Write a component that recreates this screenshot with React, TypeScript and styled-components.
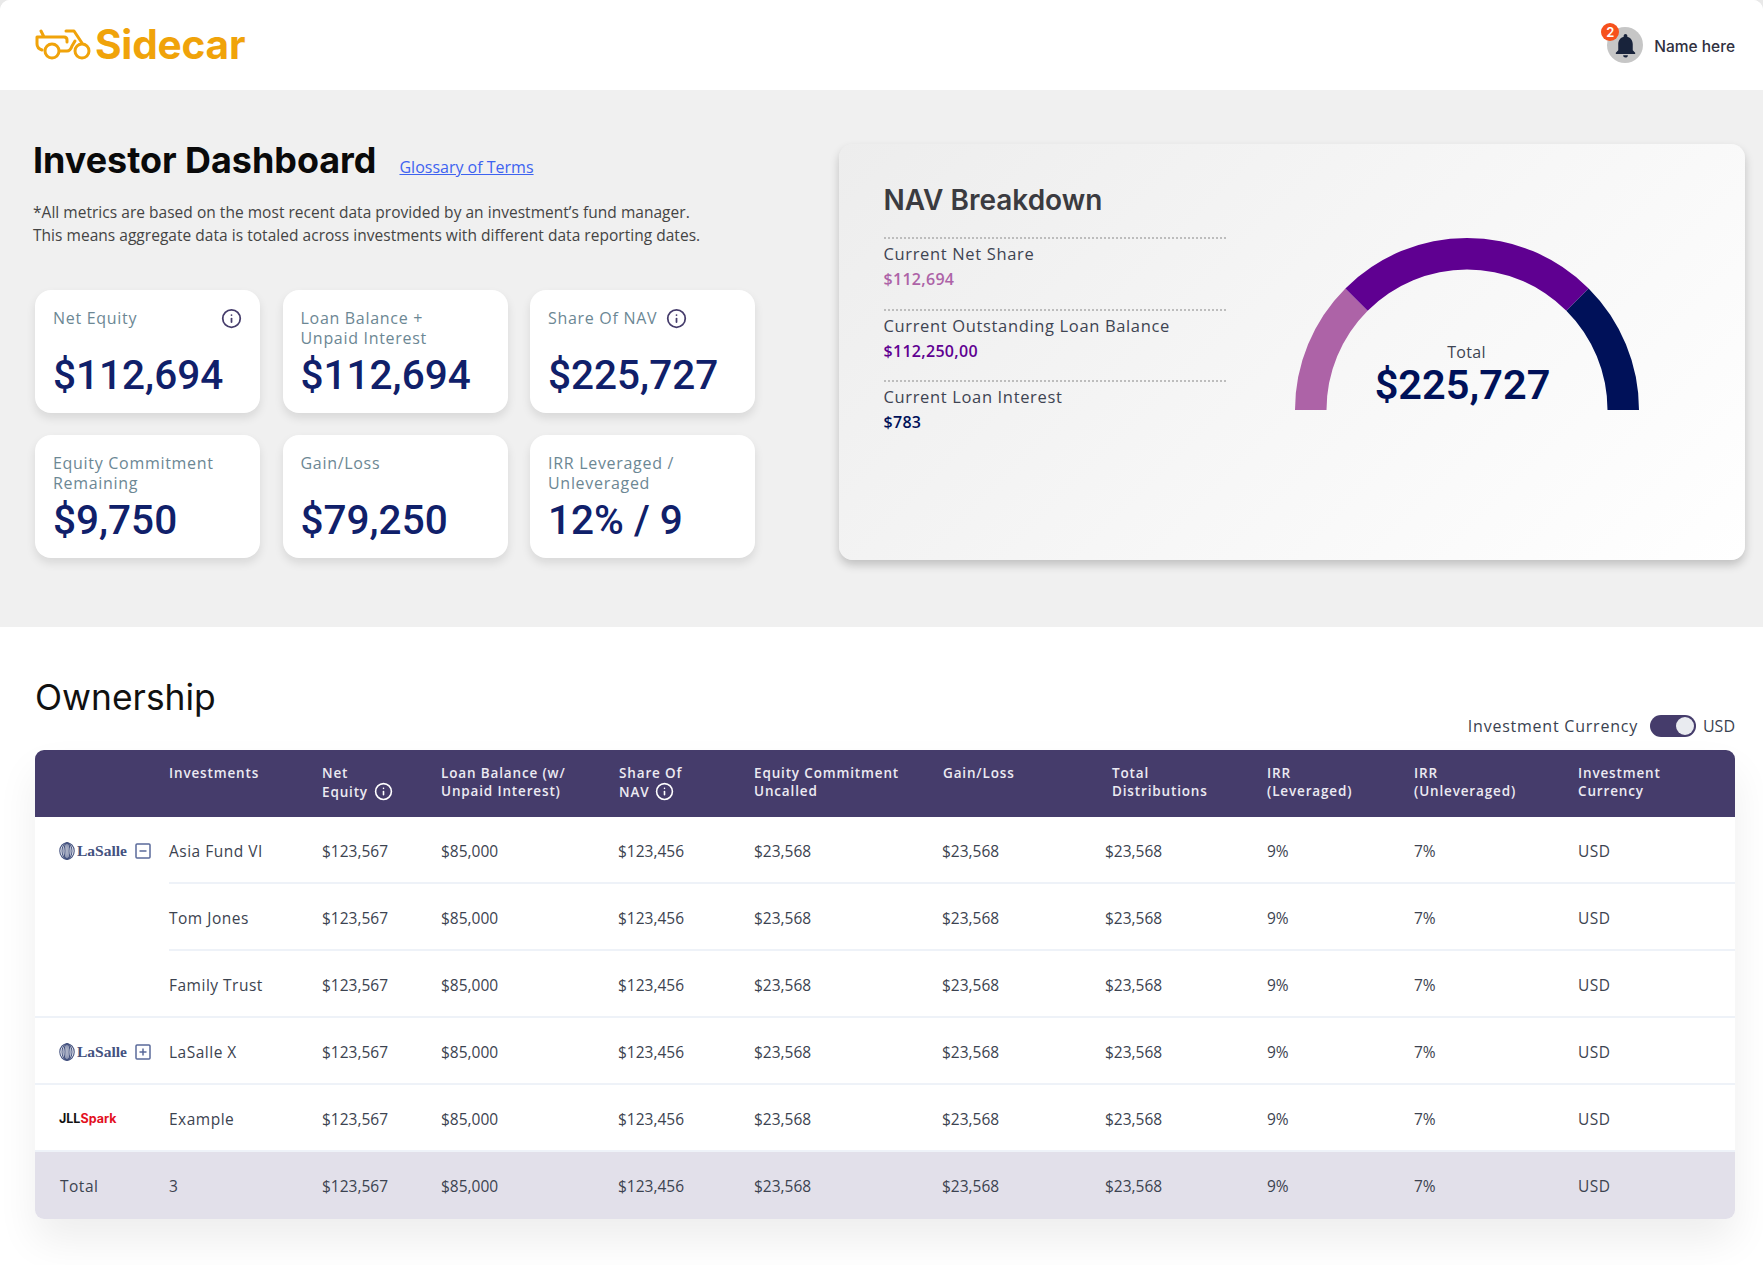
import React from "react";
import styled, { createGlobalStyle } from "styled-components";
import { Info } from "lucide-react";
import { MdNotifications } from "react-icons/md";

const soft = `"Open Sans", "Lato", sans-serif`;
const strong = `"Inter", "Liberation Sans", sans-serif`;
const digits = `"Roboto", "Liberation Sans", sans-serif`;

const Global = createGlobalStyle`
  html, body { margin: 0; padding: 0; background: #e9e9e9; }
  body { font-family: ${soft}; color: #3c4350; }
  * { box-sizing: border-box; }
`;

const Page = styled.div`
  width: 1763px;
  min-height: 1265px;
  background: #fff;
  border-radius: 10px 10px 0 0;
  overflow: hidden;
`;

const TopBar = styled.header`
  height: 90px;
  display: flex;
  align-items: center;
  justify-content: space-between;
  padding: 0 28px 0 35px;
  background: #fff;
`;
const Brand = styled.div`
  display: flex;
  align-items: center;
  gap: 4px;
`;
const BrandName = styled.span`
  font: 700 40.6px/46px ${strong};
  color: #f0a30a;
  letter-spacing: -0.2px;
`;
const UserBox = styled.div`
  display: flex;
  align-items: center;
  gap: 11px;
`;
const Avatar = styled.div`
  position: relative;
  width: 36px;
  height: 36px;
  border-radius: 50%;
  background: #c6c6c6;
  color: #18233b;
  display: flex;
  align-items: center;
  justify-content: center;
`;
const Badge = styled.span`
  position: absolute;
  left: -6px;
  top: -4px;
  width: 18px;
  height: 18px;
  border-radius: 50%;
  background: #f6511d;
  color: #fff;
  font: 600 13px/18px ${strong};
  text-align: center;
`;
const UserName = styled.span`
  padding-top: 3px;
  font: 500 15.5px/20px ${strong};
  color: #30303f;
`;

const Summary = styled.section`
  height: 537px;
  background: #f0f0f0;
  display: flex;
  align-items: flex-start;
  padding: 48px 18px 0 33px;
`;
const SummaryLeft = styled.div`
  flex: none;
  width: 806px;
`;
const TitleRow = styled.div`
  display: flex;
  align-items: baseline;
  gap: 23px;
`;
const PageTitle = styled.h1`
  margin: 0;
  font: 700 35.9px/44px ${strong};
  color: #0a0a0a;
`;
const Glossary = styled.a`
  font: 500 16px/20px ${soft};
  color: #3e63f0;
  text-decoration: underline;
`;
const Note = styled.p`
  margin: 19px 0 0;
  font: 400 15.5px/23px ${soft};
  letter-spacing: 0.03px;
  color: #444;
`;
const MetricGrid = styled.div`
  margin: 43px 0 0 2px;
  display: grid;
  grid-template-columns: repeat(3, 225px);
  column-gap: 22.5px;
  row-gap: 22px;
`;
const MetricCard = styled.div`
  height: 123px;
  background: #fff;
  border-radius: 16px;
  padding: 18px 18px 0;
  box-shadow: 0 5px 10px rgba(0, 0, 0, 0.1);
`;
const MetricHead = styled.div<{ $spread?: boolean }>`
  min-height: 40px;
  display: flex;
  align-items: flex-start;
  justify-content: ${(p) => (p.$spread ? "space-between" : "flex-start")};
  gap: 9px;
  font: 400 16px/20px ${soft};
  letter-spacing: 0.7px;
  color: #6c8794;
`;
const InfoMark = styled(Info)<{ $tone?: string }>`
  flex: none;
  color: ${(p) => p.$tone || "#453c6b"};
`;
const MetricValue = styled.div`
  padding-top: 1px;
  font: 500 40.5px/52px ${digits};
  color: #10206a;
`;

const NavCard = styled.div`
  margin-top: 6px;
  width: 906px;
  height: 416px;
  border-radius: 14px;
  background: linear-gradient(135deg, #ededed 0%, #ffffff 100%);
  box-shadow: 0 5px 10px rgba(0, 0, 0, 0.2);
  padding: 38px 44.5px 0;
  display: flex;
`;
const NavList = styled.div`
  flex: none;
  width: 342px;
`;
const NavTitle = styled.h2`
  margin: 0 0 19px;
  font: 600 28px/37px ${strong};
  color: #3b3b40;
`;
const NavRow = styled.div`
  height: 71.5px;
  margin-top: -1px;
  margin-bottom: 1px;
  border-top: 2px dotted #bdbdbd;
  padding-top: 4px;
`;
const NavLabel = styled.div`
  font: 400 16.5px/22px ${soft};
  letter-spacing: 0.65px;
  color: #3e4452;
`;
const NavValue = styled.div<{ $tone: string }>`
  margin-top: 1px;
  font: 600 16px/26px ${soft};
  letter-spacing: 0.3px;
  color: ${(p) => p.$tone};
`;
const Gauge = styled.div`
  position: relative;
  flex: none;
  width: 344px;
  height: 172px;
  margin: 56px 0 0 69px;
`;
const GaugeTotal = styled.div`
  position: absolute;
  left: 0;
  right: 0;
  top: 102px;
  text-align: center;
  font: 400 16px/24px ${soft};
  letter-spacing: 0.3px;
  color: #3e4452;
`;
const GaugeValue = styled.div`
  position: absolute;
  left: -4px;
  right: 4px;
  top: 124px;
  text-align: center;
  font: 600 41.5px/46px ${digits};
  color: #001159;
`;

const Ownership = styled.section`
  padding: 48px 28px 0 35px;
`;
const OwnershipBar = styled.div`
  height: 75px;
  display: flex;
  justify-content: space-between;
  align-items: flex-start;
`;
const OwnershipTitle = styled.h2`
  margin: 1px 0 0;
  font: 400 35.4px/44px ${strong};
  color: #111;
`;
const CurrencyControl = styled.div`
  align-self: flex-end;
  height: 22px;
  margin-bottom: 13px;
  display: flex;
  align-items: center;
  font: 400 16px/22px ${soft};
  letter-spacing: 0.77px;
  color: #3a4250;
`;
const CurrencyCode = styled.span`
  letter-spacing: 0;
`;
const SwitchTrack = styled.span`
  width: 46px;
  height: 22px;
  margin: 0 7px 0 12px;
  padding: 2px;
  border-radius: 11px;
  background: #453c6b;
  display: flex;
  justify-content: flex-end;
`;
const SwitchThumb = styled.span`
  width: 18px;
  height: 18px;
  border-radius: 50%;
  background: #e9ebf0;
`;

const TableFrame = styled.div`
  width: 1700px;
  border-radius: 9px;
  overflow: hidden;
`;
const TableShadow = styled.div`
  border-radius: 9px;
  box-shadow: 0 22px 40px rgba(0, 0, 0, 0.07);
`;
const columns = "134px 153px 119px 177px 136px 188px 163px 162px 147px 164px 157px";
const HeadRow = styled.div`
  display: grid;
  grid-template-columns: ${columns};
  height: 67px;
  background: #453c6b;
`;
const HeadCell = styled.div<{ $nudge?: number }>`
  padding: 14px 0 0 ${(p) => p.$nudge || 0}px;
  font: 600 13.5px/18px ${soft};
  letter-spacing: 0.85px;
  color: #eceaf2;
`;
const HeadInline = styled.span`
  display: inline-flex;
  align-items: center;
  gap: 6px;
`;
const BodyRow = styled.div<{ $total?: boolean }>`
  display: grid;
  grid-template-columns: ${columns};
  height: 67px;
  background: ${(p) => (p.$total ? "#e2e0ea" : "#fff")};
`;
const Cell = styled.div<{ $plain?: boolean; $word?: boolean }>`
  display: flex;
  align-items: center;
  padding-top: 2px;
  font: 400 15.5px/20px ${soft};
  letter-spacing: ${(p) => (p.$word ? "0.5px" : "0")};
  color: #3c4350;
  border-bottom: 2px solid ${(p) => (p.$plain ? "transparent" : "#eef2f8")};
`;
const LogoCell = styled(Cell)`
  justify-content: space-between;
  padding: 2px 18px 0 24px;
`;
const LaSalle = styled.span`
  display: flex;
  align-items: center;
  gap: 2px;
  font: 700 15.5px/18px "Liberation Serif", serif;
  letter-spacing: 0;
  color: #44527f;
`;
const ExpandBox = styled.span`
  flex: none;
  width: 16px;
  height: 16px;
  color: #5a6a9a;
  display: flex;
`;
const Spark = styled.span`
  font: 700 12.5px/16px ${strong};
  letter-spacing: 0;
  color: #e3101f;
`;
const SparkBlack = styled.span`
  color: #111;
`;
const TotalLabel = styled(Cell)`
  padding-left: 25px;
`;

const SidecarLogo = () => (
  <svg width="56" height="32" viewBox="0 0 56 32" fill="none" stroke="#f0a30a" strokeWidth="3" strokeLinecap="round" strokeLinejoin="round">
    <circle cx="17" cy="22" r="7" />
    <circle cx="47" cy="22" r="7" />
    <path d="M6 2l3 6M2 8h27c2 0 3 1 3 3v2M2 8v7c0 3 2 5 5 6" />
    <path d="M31 2h8l8 12M25 22h7c3 0 4-2 5-5l3-5" />
  </svg>
);

const Globe = () => (
  <svg width="16" height="18" viewBox="0 0 16 18" fill="none" stroke="#44527f" strokeWidth="1.1">
    <ellipse cx="8" cy="9" rx="7.2" ry="8.2" />
    <ellipse cx="8" cy="9" rx="5" ry="8.2" />
    <ellipse cx="8" cy="9" rx="3" ry="8.2" />
    <ellipse cx="8" cy="9" rx="1.1" ry="8.2" />
  </svg>
);

const Expand = ({ open }: { open: boolean }) => (
  <ExpandBox>
    <svg width="16" height="16" viewBox="0 0 16 16" fill="none" stroke="currentColor" strokeWidth="1.5">
      <rect x="1" y="1" width="14" height="14" rx="1" />
      <path d={open ? "M4.5 8h7" : "M4.5 8h7M8 4.5v7"} />
    </svg>
  </ExpandBox>
);

const metrics = [
  { label: ["Net Equity"], value: "$112,694", info: "spread" },
  { label: ["Loan Balance +", "Unpaid Interest"], value: "$112,694" },
  { label: ["Share Of NAV"], value: "$225,727", info: "inline" },
  { label: ["Equity Commitment", "Remaining"], value: "$9,750" },
  { label: ["Gain/Loss"], value: "$79,250" },
  { label: ["IRR Leveraged /", "Unleveraged"], value: "12% / 9" },
];

const navRows = [
  { label: "Current Net Share", value: "$112,694", tone: "#ad63a7" },
  { label: "Current Outstanding Loan Balance", value: "$112,250,00", tone: "#5f0091" },
  { label: "Current Loan Interest", value: "$783", tone: "#001159" },
];

const figures = ["$123,567", "$85,000", "$123,456", "$23,568", "$23,568", "$23,568", "9%", "7%", "USD"];

const rows: { name: string; logo: React.ReactNode; plain?: boolean }[] = [
  {
    name: "Asia Fund VI",
    plain: true,
    logo: (
      <>
        <LaSalle><Globe />LaSalle</LaSalle>
        <Expand open />
      </>
    ),
  },
  { name: "Tom Jones", plain: true, logo: null },
  { name: "Family Trust", logo: null },
  {
    name: "LaSalle X",
    logo: (
      <>
        <LaSalle><Globe />LaSalle</LaSalle>
        <Expand open={false} />
      </>
    ),
  },
  { name: "Example", logo: <Spark><SparkBlack>JLL</SparkBlack>Spark</Spark> },
];

const polar = (deg: number, r: number) => {
  const a = (deg * Math.PI) / 180;
  return `${172 - r * Math.cos(a)} ${172 - r * Math.sin(a)}`;
};
const arc = (from: number, to: number) =>
  `M${polar(from, 172)} A172 172 0 0 1 ${polar(to, 172)} L${polar(to, 140.5)} A140.5 140.5 0 0 0 ${polar(from, 140.5)} Z`;

export default function App() {
  return (
    <Page>
      <Global />
      <TopBar>
        <Brand>
          <SidecarLogo />
          <BrandName>Sidecar</BrandName>
        </Brand>
        <UserBox>
          <Avatar>
            <MdNotifications size={29} />
            <Badge>2</Badge>
          </Avatar>
          <UserName>Name here</UserName>
        </UserBox>
      </TopBar>

      <Summary>
        <SummaryLeft>
          <TitleRow>
            <PageTitle>Investor Dashboard</PageTitle>
            <Glossary href="#">Glossary of Terms</Glossary>
          </TitleRow>
          <Note>
            *All metrics are based on the most recent data provided by an investment’s fund manager.
            <br />
            This means aggregate data is totaled across investments with different data reporting dates.
          </Note>
          <MetricGrid>
            {metrics.map((m, i) => (
              <MetricCard key={i}>
                <MetricHead $spread={m.info === "spread"}>
                  <span>
                    {m.label.map((l, j) => (
                      <React.Fragment key={j}>
                        {j > 0 && <br />}
                        {l}
                      </React.Fragment>
                    ))}
                  </span>
                  {m.info && <InfoMark size={21} strokeWidth={2} />}
                </MetricHead>
                <MetricValue>{m.value}</MetricValue>
              </MetricCard>
            ))}
          </MetricGrid>
        </SummaryLeft>

        <NavCard>
          <NavList>
            <NavTitle>NAV Breakdown</NavTitle>
            {navRows.map((r) => (
              <NavRow key={r.label}>
                <NavLabel>{r.label}</NavLabel>
                <NavValue $tone={r.tone}>{r.value}</NavValue>
              </NavRow>
            ))}
          </NavList>
          <Gauge>
            <svg width="344" height="172" viewBox="0 0 344 172">
              <path d={arc(0, 45)} fill="#ad63a7" />
              <path d={arc(45, 135)} fill="#5f0091" />
              <path d={arc(135, 180)} fill="#001159" />
            </svg>
            <GaugeTotal>Total</GaugeTotal>
            <GaugeValue>$225,727</GaugeValue>
          </Gauge>
        </NavCard>
      </Summary>

      <Ownership>
        <OwnershipBar>
          <OwnershipTitle>Ownership</OwnershipTitle>
          <CurrencyControl>
            Investment Currency
            <SwitchTrack>
              <SwitchThumb />
            </SwitchTrack>
            <CurrencyCode>USD</CurrencyCode>
          </CurrencyControl>
        </OwnershipBar>
        <TableShadow>
          <TableFrame>
            <HeadRow>
              <HeadCell />
              <HeadCell>Investments</HeadCell>
              <HeadCell>
                Net
                <br />
                <HeadInline>
                  Equity <InfoMark size={19} strokeWidth={2} $tone="#fff" />
                </HeadInline>
              </HeadCell>
              <HeadCell>
                Loan Balance (w/
                <br />
                Unpaid Interest)
              </HeadCell>
              <HeadCell $nudge={1}>
                Share Of
                <br />
                <HeadInline>
                  NAV <InfoMark size={19} strokeWidth={2} $tone="#fff" />
                </HeadInline>
              </HeadCell>
              <HeadCell>
                Equity Commitment
                <br />
                Uncalled
              </HeadCell>
              <HeadCell $nudge={1}>Gain/Loss</HeadCell>
              <HeadCell $nudge={7}>
                Total
                <br />
                Distributions
              </HeadCell>
              <HeadCell>
                IRR
                <br />
                (Leveraged)
              </HeadCell>
              <HeadCell>
                IRR
                <br />
                (Unleveraged)
              </HeadCell>
              <HeadCell>
                Investment
                <br />
                Currency
              </HeadCell>
            </HeadRow>
            {rows.map((r) => (
              <BodyRow key={r.name}>
                <LogoCell $plain={r.plain}>{r.logo}</LogoCell>
                <Cell $word>{r.name}</Cell>
                {figures.map((f, i) => (
                  <Cell key={i} $word={f === "USD"}>{f}</Cell>
                ))}
              </BodyRow>
            ))}
            <BodyRow $total>
              <TotalLabel $plain $word>Total</TotalLabel>
              <Cell $plain>3</Cell>
              {figures.map((f, i) => (
                <Cell $plain key={i} $word={f === "USD"}>{f}</Cell>
              ))}
            </BodyRow>
          </TableFrame>
        </TableShadow>
      </Ownership>
    </Page>
  );
}
